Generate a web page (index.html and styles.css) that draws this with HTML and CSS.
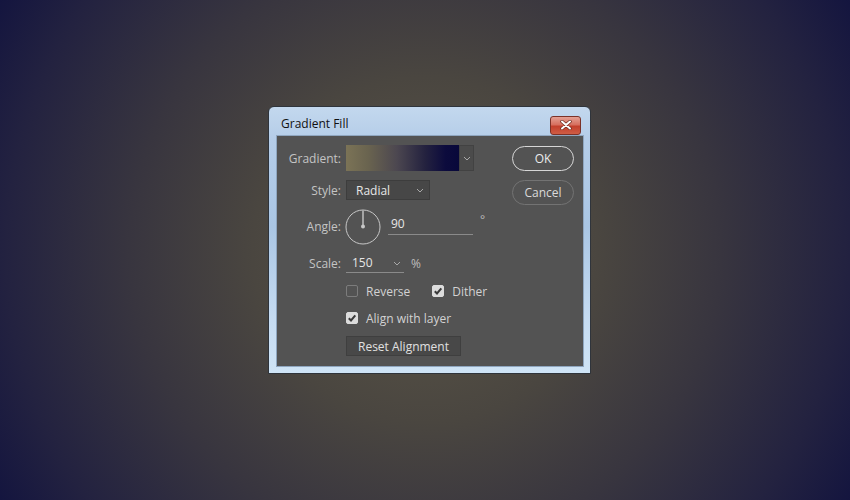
FILE: index.html
```html
<!DOCTYPE html>
<html lang="en">
<head>
    <meta charset="UTF-8">
    <meta name="viewport" content="width=device-width, initial-scale=1.0">
    <title>Gradient Fill</title>
    <link rel="stylesheet" href="styles.css">
</head>
<body>
    <div class="dialog">
        <div class="titlebar">
            <span class="title">Gradient Fill</span>
            <span class="close">
                <svg width="14" height="10" viewBox="0 0 14 10">
                    <path d="M3 1.5 L11 8.5 M11 1.5 L3 8.5" stroke="#6b2a20" stroke-width="3.4" stroke-linecap="round"/>
                    <path d="M3 1.5 L11 8.5 M11 1.5 L3 8.5" stroke="#ffffff" stroke-width="2" stroke-linecap="round"/>
                </svg>
            </span>
        </div>
        <div class="panel">
            <div class="form">
                <span class="lbl">Gradient:</span>
                <div class="grad-pick">
                    <div class="swatch"></div>
                    <div class="drop">
                        <svg class="chev" width="8" height="5" viewBox="0 0 8 5"><path d="M1 1 L4 4 L7 1" fill="none" stroke="#a8a8a8" stroke-width="1"/></svg>
                    </div>
                </div>

                <span class="lbl">Style:</span>
                <div class="select">
                    <span>Radial</span>
                    <svg class="chev" width="8" height="5" viewBox="0 0 8 5"><path d="M1 1 L4 4 L7 1" fill="none" stroke="#a8a8a8" stroke-width="1"/></svg>
                </div>

                <span class="lbl lbl-angle">Angle:</span>
                <div class="angle-row">
                    <svg class="dial" width="36" height="36" viewBox="0 0 36 36">
                        <circle cx="18" cy="18" r="17" fill="none" stroke="#c8c8c8" stroke-width="1"/>
                        <line x1="18" y1="1.5" x2="18" y2="17" stroke="#c8c8c8" stroke-width="1.4"/>
                        <circle cx="18" cy="17.5" r="2" fill="#c8c8c8"/>
                    </svg>
                    <div class="field angle-field">90</div>
                    <span class="unit deg">°</span>
                </div>

                <span class="lbl">Scale:</span>
                <div class="scale-row">
                    <div class="field scale-field">
                        <span>150</span>
                        <svg class="chev" width="8" height="5" viewBox="0 0 8 5"><path d="M1 1 L4 4 L7 1" fill="none" stroke="#a8a8a8" stroke-width="1"/></svg>
                    </div>
                    <span class="unit">%</span>
                </div>

                <div class="check-row">
                    <span class="cbox"></span>
                    <span class="ctext">Reverse</span>
                    <span class="cbox on dither">
                        <svg width="12" height="12" viewBox="0 0 12 12"><path d="M2.8 6.2 L5 8.5 L9.3 3.4" fill="none" stroke="#3a3a3a" stroke-width="2"/></svg>
                    </span>
                    <span class="ctext">Dither</span>
                </div>
                <div class="check-row">
                    <span class="cbox on">
                        <svg width="12" height="12" viewBox="0 0 12 12"><path d="M2.8 6.2 L5 8.5 L9.3 3.4" fill="none" stroke="#3a3a3a" stroke-width="2"/></svg>
                    </span>
                    <span class="ctext">Align with layer</span>
                </div>
                <div class="reset-row">
                    <button class="reset">Reset Alignment</button>
                </div>
            </div>
            <div class="buttons">
                <button class="pill ok">OK</button>
                <button class="pill cancel">Cancel</button>
            </div>
        </div>
    </div>
</body>
</html>
```

FILE: styles.css
```css
* {
    margin: 0;
    box-sizing: border-box;
}
html, body {
    height: 100%;
}
body {
    font-family: "Open Sans", "Noto Sans", sans-serif;
    font-size: 12px;
    background: radial-gradient(circle farthest-corner at 50% 50%, #5d5748 0%, #4a4640 35%, #38353f 60%, #232240 85%, #14153f 100%);
    padding: 106px 0 0 268px;
}
.dialog {
    width: 323px;
    border: 1px solid #2f343b;
    border-radius: 6px 6px 0 0;
    background: linear-gradient(180deg, #c3d8ee 0%, #b5cde8 12%, #aac6e4 45%, #c6dcf2 80%, #cfe4f6 100%);
    padding: 0 6px 6px 7px;
}
.titlebar {
    height: 28px;
    display: flex;
    align-items: center;
    justify-content: space-between;
    padding-left: 5px;
    padding-right: 3px;
}
.title {
    color: #111;
    font-size: 12px;
    margin-top: 4px;
}
.close {
    width: 31px;
    height: 19px;
    margin-top: 8px;
    border: 1px solid #7b3228;
    border-radius: 3px;
    background: linear-gradient(180deg, #e4a094 0%, #d7705f 45%, #c3402c 55%, #cf5d45 100%);
    display: flex;
    align-items: center;
    justify-content: center;
}
.panel {
    background: #535353;
    border: 1px solid #8fa6bf;
    display: flex;
    padding: 9px 9px 10px 0;
}
.form {
    display: grid;
    grid-template-columns: 64px auto;
    grid-template-rows: 26px 20px 35px 20px 18px 18px 20px;
    column-gap: 5px;
    row-gap: 9px;
    align-items: center;
}
.lbl {
    color: #c4c4c4;
    text-align: right;
}
.lbl-angle {
    margin-top: -1px;
}
.grad-pick {
    display: flex;
    height: 26px;
    width: 128px;
}
.swatch {
    flex: 1;
    background: linear-gradient(90deg, #7b7356 0%, #69634f 20%, #4c4750 45%, #24223f 70%, #0c0b3d 88%, #08083a 100%);
}
.drop {
    width: 15px;
    background: #4b4b4b;
    border: 1px solid #424242;
    display: flex;
    align-items: center;
    justify-content: center;
}
.select {
    width: 84px;
    height: 20px;
    background: #474747;
    border: 1px solid #3d3d3d;
    display: flex;
    align-items: center;
    justify-content: space-between;
    padding: 0 5px 0 9px;
    color: #e6e6e6;
}
.angle-row {
    display: flex;
    align-items: flex-start;
}
.dial {
    display: block;
    margin-left: -1px;
}
.field {
    color: #e6e6e6;
    border-bottom: 1px solid #8a8a8a;
    height: 22px;
    display: flex;
    align-items: center;
}
.angle-field {
    width: 85px;
    margin-left: 7px;
    margin-top: 4px;
    padding-left: 3px;
}
.unit {
    color: #bdbdbd;
    margin-left: 7px;
}
.deg {
    margin-top: 2px;
}
.scale-row {
    display: flex;
    align-items: center;
}
.scale-field {
    width: 58px;
    height: 20px;
    justify-content: space-between;
    padding: 0 3px 0 6px;
}
.scale-field .chev {
    margin-top: 2px;
}
.check-row {
    grid-column: 2;
    display: flex;
    align-items: center;
    color: #d2d2d2;
}
.cbox {
    width: 12px;
    height: 12px;
    border: 1px solid #7c7c7c;
    border-radius: 2px;
    display: flex;
}
.cbox.on {
    background: #dcdcdc;
    border-color: #dcdcdc;
}
.cbox.on svg {
    margin: -1px;
}
.ctext {
    margin-left: 8px;
}
.dither {
    margin-left: 22px;
}
.reset-row {
    grid-column: 2;
}
button {
    font-family: inherit;
    font-size: 12px;
    cursor: pointer;
}
.reset {
    width: 115px;
    height: 20px;
    background: #484848;
    border: 1px solid #3f3f3f;
    color: #e0e0e0;
    padding: 0;
}
.buttons {
    margin-left: auto;
    padding-top: 1px;
    display: flex;
    flex-direction: column;
    gap: 9px;
}
.pill {
    width: 62px;
    height: 25px;
    border-radius: 13px;
    background: transparent;
    padding: 0;
}
.ok {
    border: 1.5px solid #d6d6d6;
    color: #ececec;
}
.cancel {
    border: 1px solid #737373;
    color: #dadada;
}
```
